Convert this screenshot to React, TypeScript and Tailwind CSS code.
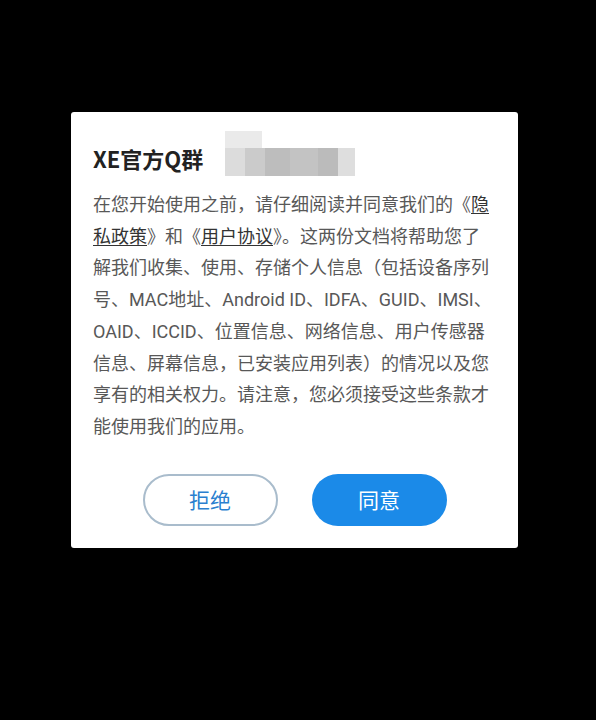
import React from "react";

const lines: React.ReactNode[] = [
  <>在您开始使用之前，请仔细阅读并同意我们的《<span className="text-[#333] underline underline-offset-2">隐</span></>,
  <><span className="text-[#333] underline underline-offset-2">私政策</span>》和《<span className="text-[#333] underline underline-offset-2">用户协议</span>》。这两份文档将帮助您了</>,
  <>解我们收集、使用、存储个人信息（包括设备序列</>,
  <>号、MAC地址、Android ID、IDFA、GUID、IMSI、</>,
  <>OAID、ICCID、位置信息、网络信息、用户传感器</>,
  <>信息、屏幕信息，已安装应用列表）的情况以及您</>,
  <>享有的相关权力。请注意，您必须接受这些条款才</>,
  <>能使用我们的应用。</>,
];

export default function App() {
  return (
    <div
      className="w-[596px] h-[720px] bg-black pt-[112px] pl-[71px]"
      style={{ fontFamily: '"Noto Sans CJK SC", "Noto Sans", sans-serif' }}
    >
      <div className="w-[447px] h-[436px] bg-white rounded-[3px] flex flex-col pl-[22px] pr-[20px] pt-[30px]">
        <div className="flex items-start h-[48px]">
          <div className="text-[22px] leading-[30px] font-bold text-[#222] mt-[1px]">XE官方Q群</div>
          <div className="ml-[22px] relative w-[130px] h-[46px] -mt-[11px]">
            <div className="absolute left-0 top-0 w-[37px] h-[26px] bg-[#eaeaea]" />
            <div className="absolute left-0 top-[17px] flex h-[28px]">
              <div className="w-[20px] bg-[#dcdcdc]" />
              <div className="w-[20px] bg-[#cbcbcb]" />
              <div className="w-[25px] bg-[#bdbdbd]" />
              <div className="w-[28px] bg-[#c3c3c3]" />
              <div className="w-[20px] bg-[#bbbbbb]" />
              <div className="w-[17px] bg-[#dedede]" />
            </div>
          </div>
        </div>
        <div
          className="mt-[-1px] text-[18px] leading-[31.7px] text-[#585858] whitespace-nowrap"
          style={{ fontFamily: 'Roboto, "Noto Sans CJK SC", sans-serif' }}
        >
          {lines.map((l, i) => (
            <div key={i}>{l}</div>
          ))}
        </div>
        <div className="flex justify-center gap-[34px] mt-[31px] -ml-[22px] -mr-[20px]">
          <button className="w-[135px] h-[52px] rounded-full border-2 border-[#a9bccc] text-[#2a7fcf] text-[21px] bg-white">
            拒绝
          </button>
          <button className="w-[135px] h-[52px] rounded-full bg-[#1b8ae8] text-white text-[21px]">
            同意
          </button>
        </div>
      </div>
    </div>
  );
}
